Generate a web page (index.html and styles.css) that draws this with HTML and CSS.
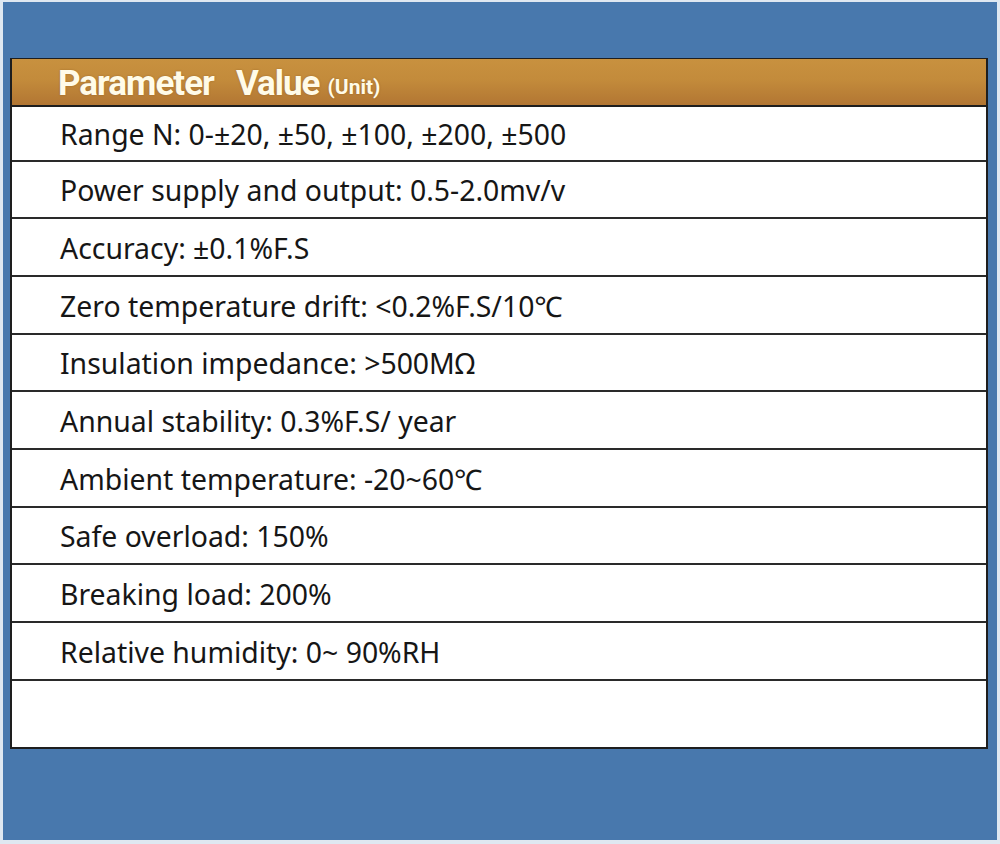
FILE: index.html
```html
<!DOCTYPE html>
<html lang="en">
<head>
<meta charset="utf-8">
<title>Parameters</title>
<link rel="stylesheet" href="styles.css">
</head>
<body>
<div class="frame">
  <div class="spec-table">
    <div class="head"><span class="h-param">Parameter</span><span class="h-value">Value</span><span class="h-unit">(Unit)</span></div>
    <div class="row first">Range N: 0-±20, ±50, ±100, ±200, ±500</div>
    <div class="row">Power supply and output: 0.5-2.0mv/v</div>
    <div class="row">Accuracy: ±0.1%F.S</div>
    <div class="row">Zero temperature drift: &lt;0.2%F.S/10℃</div>
    <div class="row">Insulation impedance: &gt;500MΩ</div>
    <div class="row">Annual stability: 0.3%F.S/ year</div>
    <div class="row">Ambient temperature: -20~60℃</div>
    <div class="row">Safe overload: 150%</div>
    <div class="row">Breaking load: 200%</div>
    <div class="row">Relative humidity: 0~ 90%RH</div>
    <div class="row empty"></div>
  </div>
</div>
</body>
</html>
```
FILE: styles.css
```css
html, body {
  margin: 0;
  padding: 0;
  background: #dfe8f1;
}
body {
  width: 1000px;
  height: 844px;
  overflow: hidden;
}
.frame {
  margin: 2px 3px 0 3px;
  height: 838px;
  background: #4878ad;
  padding: 56px 9px 0 7px;
  box-sizing: border-box;
}
.spec-table {
  border: 2px solid #1e1e1e;
  border-top-width: 1px;
  background: #fff;
  font-family: "Noto Sans", "Open Sans", sans-serif;
  color: #161616;
}
.head {
  height: 48px;
  border-bottom: 2px solid #1e1e1e;
  background: linear-gradient(to bottom, #c8913f 0%, #c38b3b 45%, #b27633 100%);
  display: flex;
  align-items: center;
  padding-left: 46px;
  padding-top: 2px;
  box-sizing: border-box;
  font-family: "Roboto", "Liberation Sans", sans-serif;
  font-weight: bold;
  color: #fffbe8;
  text-shadow: 0 0 2px rgba(90, 50, 10, 0.35);
}
.h-param {
  font-size: 35px;
  letter-spacing: -1px;
}
.h-value {
  font-size: 35px;
  letter-spacing: -1px;
  margin-left: 22px;
}
.h-unit {
  font-size: 21px;
  margin-left: 8px;
  margin-top: 8px;
}
.row {
  height: 57.7px;
  box-sizing: border-box;
  border-top: 2px solid #2a2a2a;
  display: flex;
  align-items: center;
  padding-left: 48px;
  padding-top: 2px;
  font-size: 28.4px;
}
.row.first {
  height: 52.5px;
  border-top: none;
}
.row.empty {
  height: 68px;
}
```
